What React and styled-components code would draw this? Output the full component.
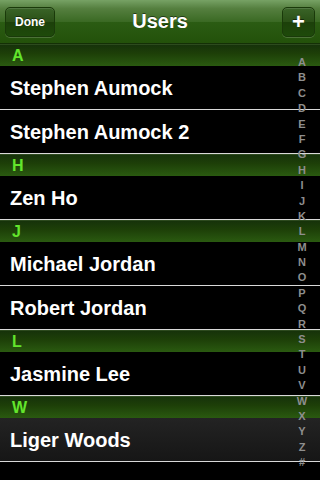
import React from "react";
import styled, { createGlobalStyle } from "styled-components";

const Global = createGlobalStyle`
  html, body { margin: 0; padding: 0; background: #000; }
  body { font-family: "Liberation Sans", Arial, sans-serif; }
`;

const Screen = styled.div`
  width: 320px;
  height: 480px;
  background: #000;
  overflow: hidden;
  display: flex;
  flex-direction: column;
`;

const NavBar = styled.div`
  height: 44px;
  flex: none;
  box-sizing: border-box;
  display: flex;
  align-items: center;
  justify-content: space-between;
  padding: 0 5px;
  background: linear-gradient(
    to bottom,
    #77a265 0%,
    #557f3f 20%,
    #3b6a24 50%,
    #2b5c13 51%,
    #23510a 100%
  );
  border-bottom: 1px solid #143006;
  position: relative;
`;

const Title = styled.div`
  position: absolute;
  left: 0;
  right: 0;
  text-align: center;
  color: #fff;
  font-weight: bold;
  font-size: 20px;
  text-shadow: 0 -1px 0 rgba(0, 0, 0, 0.5);
  pointer-events: none;
`;

const BarButton = styled.div`
  position: relative;
  z-index: 1;
  height: 30px;
  min-width: ${(p) => p.$w}px;
  box-sizing: border-box;
  display: flex;
  align-items: center;
  justify-content: center;
  border-radius: 5px;
  border: 1px solid #1a3a0a;
  box-shadow: 0 1px 0 rgba(255, 255, 255, 0.18), inset 0 1px 0 rgba(255, 255, 255, 0.12);
  background: linear-gradient(to bottom, #3a6428 0%, #2a5016 50%, #1c400a 51%, #1e4a0a 100%);
  color: #fff;
  font-weight: bold;
  font-size: ${(p) => p.$fs}px;
  text-shadow: 0 -1px 0 rgba(0, 0, 0, 0.5);
`;

const List = styled.div`
  position: relative;
  flex: 1;
  overflow: hidden;
`;

const SectionHeader = styled.div`
  height: 22px;
  box-sizing: border-box;
  padding-left: 12px;
  display: flex;
  align-items: center;
  color: #63e52c;
  font-weight: bold;
  font-size: 16px;
  background: linear-gradient(to bottom, #16320a 0%, #1d3f08 40%, #2a5a10 100%);
  border-top: 1px solid #2d4a1e;
`;

const Row = styled.div`
  height: 44px;
  box-sizing: border-box;
  padding: 2px 0 0 10px;
  display: flex;
  align-items: center;
  color: #fff;
  font-weight: bold;
  font-size: 20px;
  border-bottom: 1px solid #d9d9d9;
  background: ${(p) =>
    p.$selected ? "linear-gradient(to bottom, #232323, #161616)" : "#000"};
`;

const Index = styled.div`
  position: absolute;
  top: 11px;
  right: 6px;
  width: 24px;
  display: flex;
  flex-direction: column;
  align-items: center;
`;

const IndexItem = styled.div`
  height: 15.4px;
  line-height: 15.4px;
  font-size: 11px;
  font-weight: bold;
  color: #8e8e8e;
`;

const sections = [
  { letter: "A", names: ["Stephen Aumock", "Stephen Aumock 2"] },
  { letter: "H", names: ["Zen Ho"] },
  { letter: "J", names: ["Michael Jordan", "Robert Jordan"] },
  { letter: "L", names: ["Jasmine Lee"] },
  { letter: "W", names: ["Liger Woods"], selected: true },
];

const letters = "ABCDEFGHIJKLMNOPQRSTUVWXYZ#".split("");

export default function App() {
  return (
    <Screen>
      <Global />
      <NavBar>
        <BarButton $w={50} $fs={12}>Done</BarButton>
        <Title>Users</Title>
        <BarButton $w={33} $fs={22}>+</BarButton>
      </NavBar>
      <List>
        {sections.map((s) => (
          <div key={s.letter}>
            <SectionHeader>{s.letter}</SectionHeader>
            {s.names.map((n) => (
              <Row key={n} $selected={s.selected}>
                {n}
              </Row>
            ))}
          </div>
        ))}
        <Index>
          {letters.map((l) => (
            <IndexItem key={l}>{l}</IndexItem>
          ))}
        </Index>
      </List>
    </Screen>
  );
}
